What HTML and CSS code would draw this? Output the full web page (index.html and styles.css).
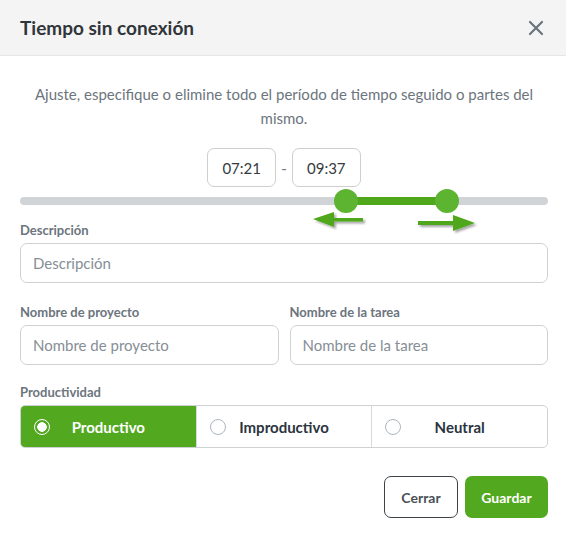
FILE: index.html
```html
<!DOCTYPE html>
<html lang="es">
<head>
<meta charset="utf-8">
<link rel="stylesheet" href="styles.css">
</head>
<body>
<div class="modal">
  <div class="modal-header">
    <h1 class="title">Tiempo sin conexión</h1>
    <svg class="close" width="16" height="16" viewBox="0 0 16 16"><path d="M2 2 L14 14 M14 2 L2 14" stroke="#6c757d" stroke-width="2.2" stroke-linecap="round"/></svg>
  </div>
  <div class="modal-body">
    <p class="intro">Ajuste, especifique o elimine todo el período de tiempo seguido o partes del mismo.</p>
    <div class="times">
      <div class="time-box">07:21</div>
      <span class="dash">-</span>
      <div class="time-box">09:37</div>
    </div>
    <div class="slider">
      <div class="track"></div>
      <div class="range"></div>
      <div class="handle handle-left"></div>
      <div class="handle handle-right"></div>
      <svg class="arrows" width="528" height="40" viewBox="0 0 528 40">
        <defs>
          <filter id="sh" x="-20%" y="-50%" width="150%" height="200%">
            <feDropShadow dx="2" dy="2" stdDeviation="1.2" flood-color="#000" flood-opacity="0.35"/>
          </filter>
        </defs>
        <g fill="#4fa81c" filter="url(#sh)">
          <polygon points="293,19 314,12 314,18 343,18 343,21.5 314,21.5 314,27"/>
          <polygon points="398,21 433,21 433,15 455,23 433,31 433,25 398,25"/>
        </g>
      </svg>
    </div>
    <div class="field">
      <label class="label">Descripción</label>
      <div class="input">Descripción</div>
    </div>
    <div class="row">
      <div class="field">
        <label class="label">Nombre de proyecto</label>
        <div class="input">Nombre de proyecto</div>
      </div>
      <div class="field">
        <label class="label">Nombre de la tarea</label>
        <div class="input">Nombre de la tarea</div>
      </div>
    </div>
    <div class="field">
      <label class="label">Productividad</label>
      <div class="segments">
        <div class="seg seg-active"><span class="radio radio-on"></span><span class="seg-text">Productivo</span></div>
        <div class="seg"><span class="radio"></span><span class="seg-text">Improductivo</span></div>
        <div class="seg"><span class="radio"></span><span class="seg-text">Neutral</span></div>
      </div>
    </div>
    <div class="actions">
      <button class="btn btn-outline">Cerrar</button>
      <button class="btn btn-primary">Guardar</button>
    </div>
  </div>
</div>
</body>
</html>
```
FILE: styles.css
```css
* { box-sizing: border-box; }
body {
  margin: 0;
  background: #fff;
  font-family: "Lato", "Liberation Sans", sans-serif;
  color: #343a40;
}
.modal { width: 566px; }
.modal-header {
  height: 56px;
  background: #f4f4f4;
  border-bottom: 1px solid #e6e6e6;
  display: flex;
  align-items: center;
  justify-content: space-between;
  padding: 0 22px 0 20px;
}
.title {
  margin: 0;
  font-size: 19px;
  font-weight: 700;
  color: #30353a;
}
.close { display: block; }
.modal-body { padding: 26px 18px 0 20px; }
.intro {
  margin: 0;
  font-size: 15px;
  line-height: 24px;
  color: #6c757d;
  text-align: center;
}
.times {
  display: flex;
  justify-content: center;
  align-items: center;
  gap: 5px;
  margin-top: 18px;
}
.time-box {
  width: 69px;
  height: 39px;
  border: 1px solid #cfcfcf;
  border-radius: 7px;
  display: flex;
  align-items: center;
  justify-content: center;
  font-size: 15px;
  color: #343a40;
}
.dash { font-size: 15px; color: #6c757d; }
.slider {
  position: relative;
  height: 35px;
}
.track {
  position: absolute;
  left: 0; right: 0;
  top: 10px;
  height: 8px;
  border-radius: 4px;
  background: #d1d4d7;
}
.range {
  position: absolute;
  left: 326px;
  width: 101px;
  top: 10px;
  height: 8px;
  background: #4fa81c;
}
.handle {
  position: absolute;
  top: 2px;
  width: 24px;
  height: 24px;
  border-radius: 50%;
  background: #5cb430;
}
.handle-left { left: 314px; }
.handle-right { left: 415px; }
.arrows { position: absolute; left: 0; top: 13px; overflow: visible; }
.field { display: flex; flex-direction: column; flex: 1; }
.label {
  font-size: 13px;
  line-height: 16px;
  font-weight: 700;
  color: #6c757d;
  margin-bottom: 5px;
}
.input {
  height: 40px;
  border: 1px solid #cfd2d5;
  border-radius: 7px;
  display: flex;
  align-items: center;
  padding: 0 12px;
  font-size: 15px;
  color: #868e96;
}
.row {
  display: flex;
  gap: 11px;
  margin-top: 21px;
}
.row + .field { margin-top: 19px; }
.segments {
  display: flex;
  height: 43px;
  border: 1px solid #cfd2d5;
  border-radius: 5px;
  overflow: hidden;
}
.seg {
  flex: 1;
  display: flex;
  align-items: center;
  padding-left: 13px;
  border-left: 1px solid #d6d9dc;
  font-size: 15px;
  font-weight: 700;
  color: #2b3440;
}
.seg:first-child { border-left: none; }
.seg-active { background: #52a91f; color: #fff; }
.seg-text { flex: 1; text-align: center; padding-right: 29px; }
.radio {
  width: 16px;
  height: 16px;
  border-radius: 50%;
  border: 1px solid #adb5bd;
  background: #fff;
  flex: none;
}
.radio-on {
  background: radial-gradient(circle, #fff 0 4.5px, #52a91f 5px 6px, transparent 6.5px);
  border: 1.5px solid #fff;
}
.actions {
  display: flex;
  justify-content: flex-end;
  gap: 7px;
  margin-top: 28px;
}
.btn {
  height: 42px;
  border-radius: 7px;
  font-family: inherit;
  font-size: 14px;
  font-weight: 700;
  cursor: pointer;
}
.btn-outline {
  width: 74px;
  background: #fff;
  border: 1.5px solid #3d4349;
  color: #495057;
}
.btn-primary {
  width: 83px;
  background: #52a91f;
  border: none;
  color: #fff;
}
```
